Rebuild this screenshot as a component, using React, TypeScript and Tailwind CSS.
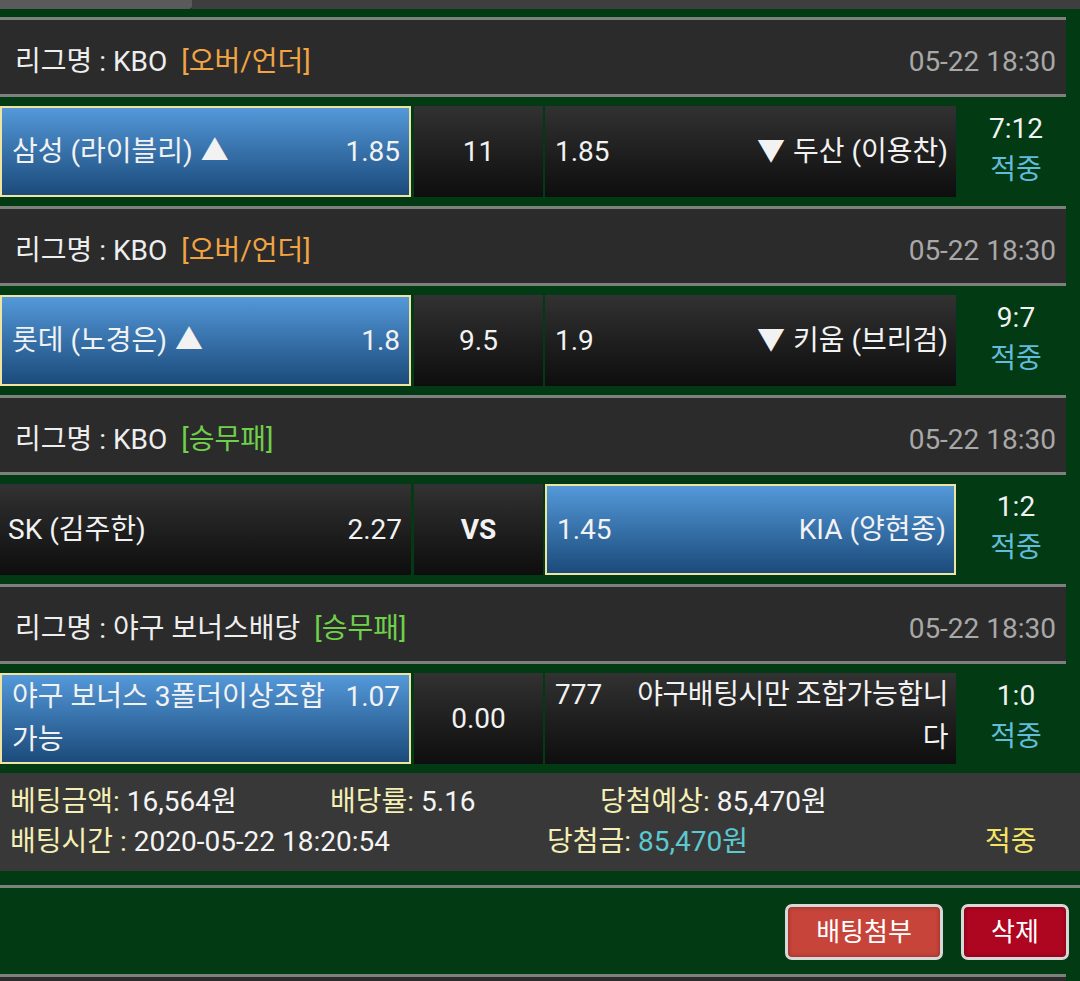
import React from 'react';

type Side = { name: string; odds: string; picked?: boolean; arrow?: 'up' | 'down' };

interface Game {
  league: string;
  tag: string;
  tagColor: string;
  time: string;
  home: Side;
  mid: string;
  midBold?: boolean;
  away: Side;
  score: string;
  multiline?: boolean;
}

const games: Game[] = [
  {
    league: 'KBO',
    tag: '[오버/언더]',
    tagColor: 'text-[#f2a444]',
    time: '05-22 18:30',
    home: { name: '삼성 (라이블리)', odds: '1.85', picked: true, arrow: 'up' },
    mid: '11',
    away: { name: '두산 (이용찬)', odds: '1.85', arrow: 'down' },
    score: '7:12',
  },
  {
    league: 'KBO',
    tag: '[오버/언더]',
    tagColor: 'text-[#f2a444]',
    time: '05-22 18:30',
    home: { name: '롯데 (노경은)', odds: '1.8', picked: true, arrow: 'up' },
    mid: '9.5',
    away: { name: '키움 (브리검)', odds: '1.9', arrow: 'down' },
    score: '9:7',
  },
  {
    league: 'KBO',
    tag: '[승무패]',
    tagColor: 'text-[#6fd04a]',
    time: '05-22 18:30',
    home: { name: 'SK (김주한)', odds: '2.27' },
    mid: 'VS',
    midBold: true,
    away: { name: 'KIA (양현종)', odds: '1.45', picked: true },
    score: '1:2',
  },
  {
    league: '야구 보너스배당',
    tag: '[승무패]',
    tagColor: 'text-[#6fd04a]',
    time: '05-22 18:30',
    home: { name: '야구 보너스 3폴더이상조합가능', odds: '1.07', picked: true },
    mid: '0.00',
    away: { name: '야구배팅시만 조합가능합니다', odds: '777' },
    score: '1:0',
    multiline: true,
  },
];

const font = "font-['Roboto','Noto_Sans_CJK_KR',sans-serif]";

const cellBg = (picked?: boolean) =>
  picked
    ? 'bg-linear-to-b from-[#5499da] to-[#1b4b7b] border-2 border-[#efe5a0]'
    : 'bg-linear-to-b from-[#323232] to-[#0e0e0e]';

const HomeCell: React.FC<{ side: Side; multiline?: boolean }> = ({ side, multiline }) => (
  <div
    className={`w-[411px] h-[91px] shrink-0 flex ${multiline ? 'items-start' : 'items-center'} ${
      side.picked ? 'pl-[10px]' : 'pl-[8px]'
    } pr-[9px] ${cellBg(side.picked)}`}
  >
    <span className={`flex-1 ${multiline ? 'leading-[43px]' : ''}`}>
      {side.name}
      {side.arrow === 'up' && <span className="ml-[8px]">▲</span>}
    </span>
    <span className={`shrink-0 pl-[14px] ${multiline ? 'leading-[43px]' : ''}`}>{side.odds}</span>
  </div>
);

const AwayCell: React.FC<{ side: Side; multiline?: boolean }> = ({ side, multiline }) => (
  <div
    className={`w-[411px] h-[91px] shrink-0 flex ${multiline ? 'items-start' : 'items-center'} pl-[10px] pr-[8px] ${cellBg(
      side.picked
    )}`}
  >
    <span className={`shrink-0 ${multiline ? 'leading-[43px]' : 'pr-[14px]'}`}>{side.odds}</span>
    {multiline ? (
      <span className="ml-auto w-[320px] text-right leading-[43px] tracking-[-0.4px]">{side.name}</span>
    ) : (
      <span className="flex-1 text-right">
        {side.arrow === 'down' && <span className="mr-[8px]">▼</span>}
        {side.name}
      </span>
    )}
  </div>
);

const GameBlock: React.FC<{ game: Game }> = ({ game }) => (
  <div>
    <div className="mr-[14px] h-[80px] bg-[#2b2b2b] border-y-[3px] border-[#7c817c] flex items-center justify-between pl-[15px] pr-[10px] pt-[10px]">
      <div className="flex items-center gap-[14px]">
        <span className="text-[#eeeeee]">리그명 : {game.league}</span>
        <span className={game.tagColor}>{game.tag}</span>
      </div>
      <span className="text-[#a8a8a8]">{game.time}</span>
    </div>
    <div className="flex my-[9px] text-[#f2f2f2]">
      <HomeCell side={game.home} multiline={game.multiline} />
      <div
        className={`ml-[3px] w-[129px] h-[91px] shrink-0 flex items-center justify-center ${cellBg()} ${
          game.midBold ? 'font-bold' : ''
        }`}
      >
        {game.mid}
      </div>
      <div className="ml-[2px]">
        <AwayCell side={game.away} multiline={game.multiline} />
      </div>
      <div className="flex-1 pr-[4px] pb-[6px] flex flex-col items-center justify-center leading-[41px]">
        <span className="text-[#f2f2f2]">{game.score}</span>
        <span className="text-[#62bcdc]">적중</span>
      </div>
    </div>
  </div>
);

export default function App() {
  return (
    <div className={`w-[1080px] h-[981px] overflow-hidden bg-[#023a14] text-[28px] ${font}`}>
      {/* top tabs */}
      <div className="flex h-[9px]">
        <div className="w-[192px] bg-[#5a5a5a] rounded-br-[3px]" />
        <div className="flex-1 bg-[#3e3e3e]" />
      </div>
      <div className="h-[8px]" />

      {games.map((g, i) => (
        <GameBlock key={i} game={g} />
      ))}

      {/* summary */}
      <div className="mt-[1px] h-[98px] bg-[#383838] flex flex-col justify-center leading-[40px] pl-[10px]">
        <div className="flex">
          <span className="w-[320px]">
            <span className="text-[#f4efb4]">베팅금액: </span>
            <span className="text-[#f4f4f4]">16,564원</span>
          </span>
          <span className="w-[270px]">
            <span className="text-[#f4efb4]">배당률: </span>
            <span className="text-[#f4f4f4]">5.16</span>
          </span>
          <span>
            <span className="text-[#f4efb4]">당첨예상: </span>
            <span className="text-[#f4f4f4]">85,470원</span>
          </span>
        </div>
        <div className="flex">
          <span className="w-[537px]">
            <span className="text-[#f4efb4]">배팅시간 : </span>
            <span className="text-[#f4f4f4]">2020-05-22 18:20:54</span>
          </span>
          <span className="w-[438px]">
            <span className="text-[#f4efb4]">당첨금: </span>
            <span className="text-[#5cc8d0]">85,470원</span>
          </span>
          <span className="text-[#f4e565]">적중</span>
        </div>
      </div>

      <div className="h-[14px]" />
      <div className="h-[3px] bg-[#7c817c]" />

      {/* actions */}
      <div className="h-[86px] flex items-center justify-end gap-[18px] pr-[11px] pt-[2px]">
        <button className="w-[158px] h-[56px] rounded-[7px] border-[3px] border-[#d8d8d8] bg-[#c7443b] text-white text-[26px] shadow-[inset_0_0_4px_rgba(0,0,0,0.35)]">
          배팅첨부
        </button>
        <button className="w-[108px] h-[56px] rounded-[7px] border-[3px] border-[#d8d8d8] bg-[#ae0520] text-white text-[26px] shadow-[inset_0_0_4px_rgba(0,0,0,0.35)]">
          삭제
        </button>
      </div>

      <div className="mr-[14px] h-[3px] bg-[#7c817c]" />
      <div className="mr-[14px] h-[10px] bg-[#2b2b2b]" />
    </div>
  );
}
